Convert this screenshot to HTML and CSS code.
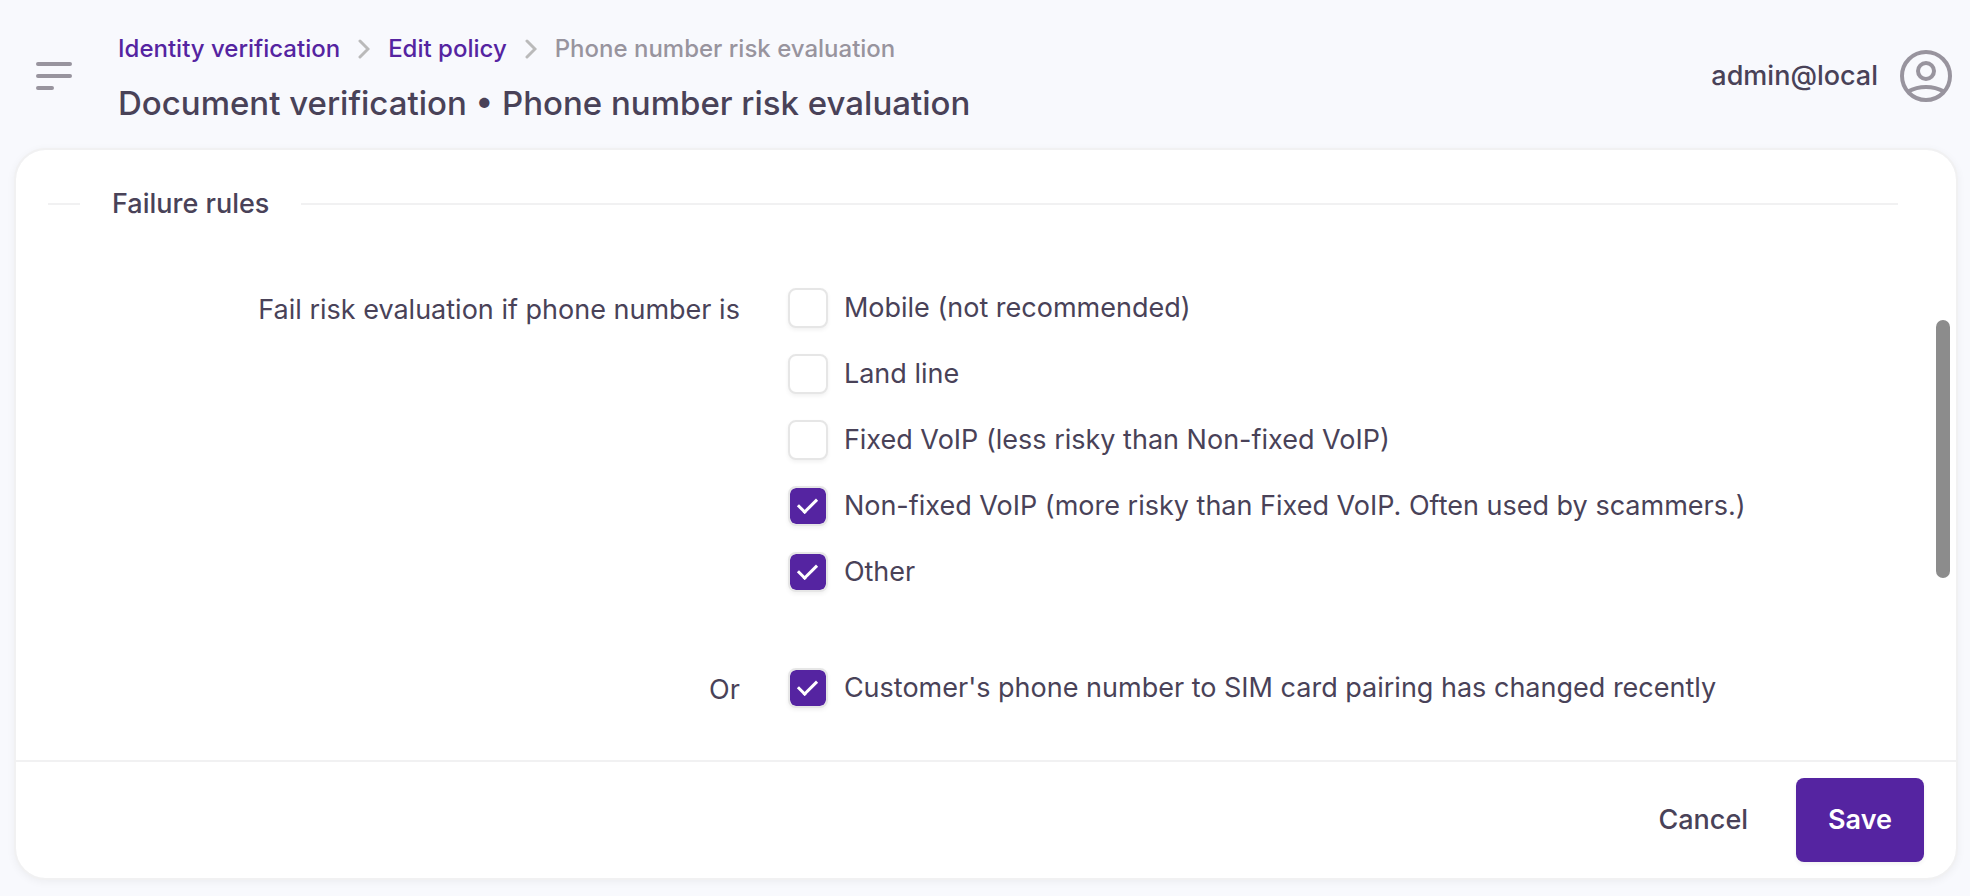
FILE: index.html
```
<!DOCTYPE html>
<html lang="en">
<head>
    <meta charset="UTF-8">
    <meta name="viewport" content="width=device-width, initial-scale=1.0">
    <title>Phone number risk evaluation</title>
    <link rel="stylesheet" href="styles.css">
</head>
<body>
    <header class="topbar">
        <button type="button" class="btn-menu" aria-label="Menu">
            <svg width="36" height="28" viewBox="0 0 36 28" fill="none" stroke="currentColor" stroke-width="4" stroke-linecap="round">
                <path d="M2 2h32M2 14h32M2 26h14"/>
            </svg>
        </button>
        <div class="heading">
            <nav class="breadcrumbs" aria-label="Breadcrumb">
                <a href="#">Identity verification</a>
                <svg class="chevron" width="12" height="20" viewBox="0 0 12 20"><path d="M2 2l8 8-8 8"/></svg>
                <a href="#">Edit policy</a>
                <svg class="chevron" width="12" height="20" viewBox="0 0 12 20"><path d="M2 2l8 8-8 8"/></svg>
                <span>Phone number risk evaluation</span>
            </nav>
            <h1>Document verification • Phone number risk evaluation</h1>
        </div>
        <button type="button" class="account">
            <span>admin@local</span>
            <svg width="52" height="52" viewBox="0 0 52 52" fill="none" stroke="#98949e" stroke-width="4">
                <circle cx="26" cy="26" r="24"/>
                <circle cx="26" cy="21" r="8"/>
                <path d="M8 41.500C19 35.500 33 35.500 44 41.500"/>
            </svg>
        </button>
    </header>
    <form class="card">
        <div class="content">
            <h2>Failure rules</h2>
            <div class="row" role="group" aria-labelledby="numberType">
                <div class="row-label" id="numberType">Fail risk evaluation if phone number is</div>
                <div class="options">
                    <label class="option"><input type="checkbox" name="mobile">Mobile (not recommended)</label>
                    <label class="option"><input type="checkbox" name="landLine">Land line</label>
                    <label class="option"><input type="checkbox" name="fixedVoip">Fixed VoIP (less risky than Non-fixed VoIP)</label>
                    <label class="option"><input type="checkbox" name="nonFixedVoip" checked>Non-fixed VoIP (more risky than Fixed VoIP. Often used by scammers.)</label>
                    <label class="option"><input type="checkbox" name="other" checked>Other</label>
                </div>
            </div>
            <div class="row" role="group" aria-labelledby="simPairing">
                <div class="row-label" id="simPairing">Or</div>
                <div class="options">
                    <label class="option"><input type="checkbox" name="simChanged" checked>Customer's phone number to SIM card pairing has changed recently</label>
                </div>
            </div>
            <div class="scroll-thumb"></div>
        </div>
        <footer class="actions">
            <button type="button" class="btn-cancel">Cancel</button>
            <button type="submit" class="btn-save">Save</button>
        </footer>
    </form>
</body>
</html>
```

FILE: styles.css
```
*,
*::before,
*::after {
    box-sizing: border-box;
}

body {
    display: flex;
    flex-direction: column;
    min-height: 100vh;
    margin: 0;
    padding: 0 12px 16px 14px;
    background: #f8f9fd;
    color: #494258;
    font-family: Inter, "Liberation Sans", sans-serif;
    font-size: 27px;
    line-height: 40px;
}

button {
    padding: 0;
    border: 0;
    background: none;
    color: inherit;
    font: inherit;
    font-weight: 500;
    cursor: pointer;
}

svg {
    display: block;
    flex: none;
}

.topbar {
    display: flex;
    align-items: center;
    height: 148px;
    padding: 4px 6px 0 22px;
}

.btn-menu {
    color: #98949e;
}

.heading {
    flex: 1;
    margin-left: 46px;
    padding-top: 6px;
}

.breadcrumbs {
    display: flex;
    align-items: center;
    gap: 18px;
    font-size: 24px;
    font-weight: 500;
    line-height: 32px;
    color: #98949e;
}

.breadcrumbs a {
    color: #5524a1;
    text-decoration: none;
}

.chevron path {
    fill: none;
    stroke: #bababa;
    stroke-width: 3;
    stroke-linecap: round;
}

h1 {
    margin: 16px 0 0;
    font-size: 33px;
    font-weight: 500;
    line-height: 44px;
}

.account {
    display: flex;
    align-items: center;
    gap: 22px;
}

.card {
    display: flex;
    flex: 1;
    flex-direction: column;
    border: 2px solid #f1f1f2;
    border-radius: 32px;
    background: #fff;
    background-clip: padding-box;
    box-shadow: 0 2px 8px rgba(0, 0, 0, 0.05);
}

.content {
    position: relative;
    flex: 1;
    padding: 34px 58px 48px 32px;
}

h2 {
    display: flex;
    align-items: center;
    gap: 32px;
    margin: 0 0 64px;
    font-size: 27px;
    font-weight: 500;
    line-height: 40px;
}

h2::before,
h2::after {
    content: "";
    width: 32px;
    height: 2px;
    background: #f1f1f2;
}

h2::after {
    flex: 1;
}

.row {
    display: grid;
    grid-template-columns: 37.4% 1fr;
    gap: 48px;
}

.row + .row {
    margin-top: 76px;
}

.row-label {
    padding-top: 2px;
    text-align: right;
}

.options {
    display: flex;
    flex-direction: column;
    align-items: flex-start;
    gap: 26px;
}

.option {
    display: flex;
    align-items: center;
    gap: 16px;
}

.option input {
    display: grid;
    flex: none;
    place-items: center;
    width: 40px;
    height: 40px;
    margin: 0;
    border: 2px solid #e6e6e6;
    border-radius: 8px;
    background: #fff;
    background-clip: padding-box;
    box-shadow: 0 2px 4px rgba(0, 0, 0, 0.06);
    appearance: none;
}

.option input:checked {
    background-color: #5524a1;
}

.option input:checked::before {
    content: "";
    width: 19px;
    height: 11px;
    margin-bottom: 6px;
    border: solid #fff;
    border-width: 0 0 3px 3px;
    transform: rotate(-45deg);
}

/* overlay scrollbar */
.scroll-thumb {
    position: absolute;
    top: 170px;
    right: 6px;
    width: 14px;
    height: 258px;
    border-radius: 7px;
    background: #8c8c8c;
}

.actions {
    display: flex;
    justify-content: flex-end;
    gap: 48px;
    padding: 16px 32px;
    border-top: 2px solid #f1f1f2;
}

.btn-save {
    padding: 22px 32px;
    border-radius: 8px;
    background: #5524a1;
    box-shadow: 0 2px 4px rgba(0, 0, 0, 0.06);
    color: #fff;
    font-weight: 600;
}
```
